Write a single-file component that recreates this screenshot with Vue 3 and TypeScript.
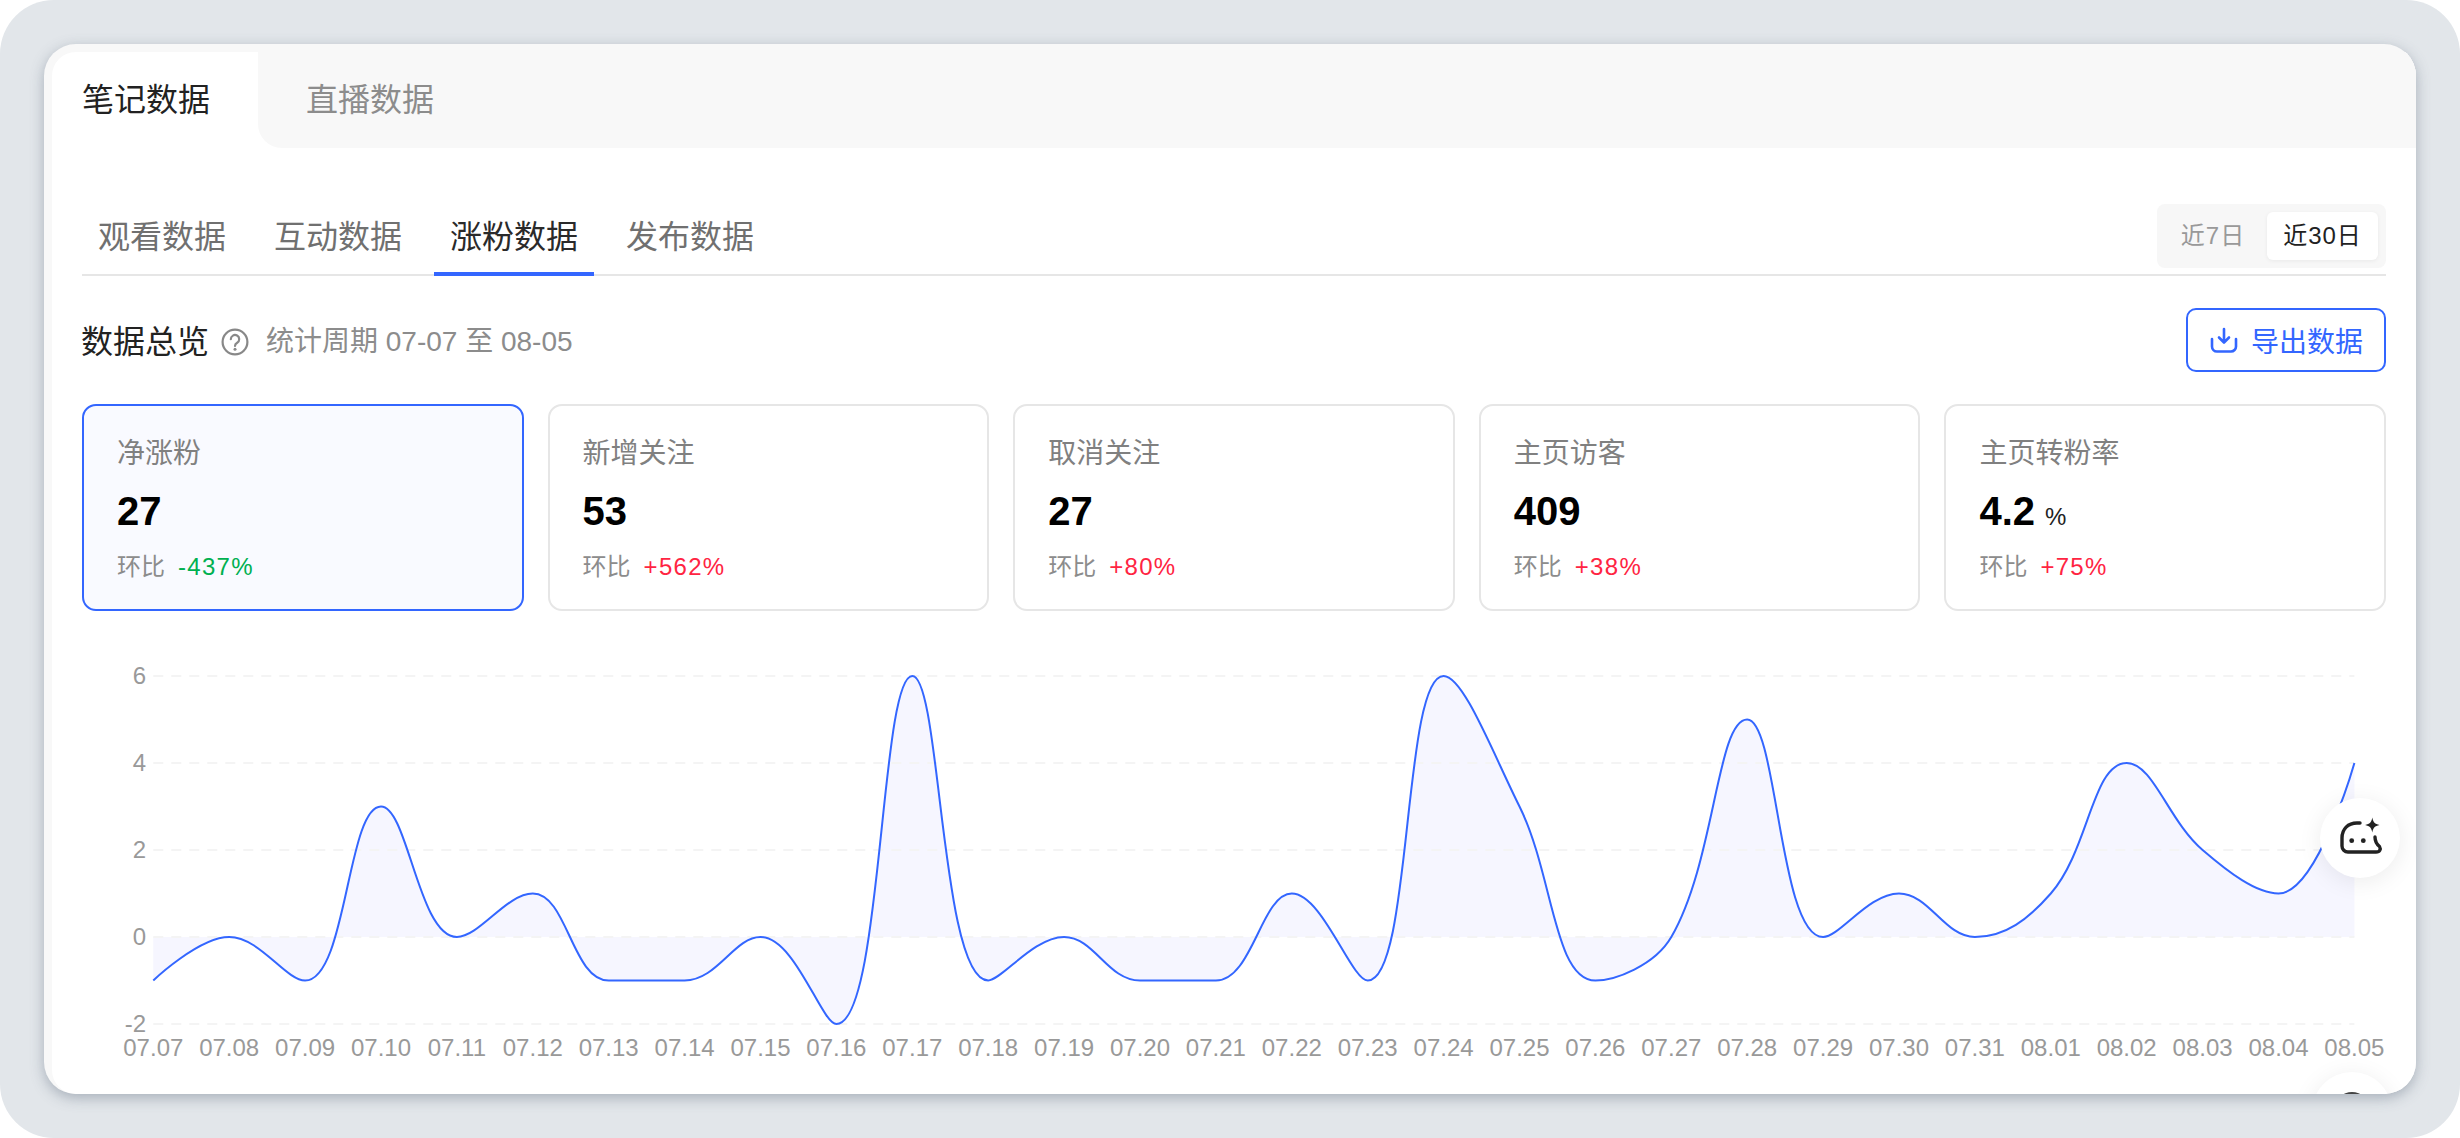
<template>
  <div class="frame">
    <div class="card">
      <div class="sheet">
        <div class="top-tabs">
          <div class="top-tab">笔记数据</div>
          <div class="top-rest">直播数据</div>
        </div>

        <div class="panel">
          <div class="sub-row">
            <div class="sub-tabs">
              <div
                v-for="t in subTabs"
                :key="t"
                class="sub-tab"
                :class="{ 'sub-tab--on': t === '涨粉数据' }"
              >{{ t }}</div>
            </div>
            <div class="seg">
              <span class="seg-item">近7日</span>
              <span class="seg-item seg-item--on">近30日</span>
            </div>
          </div>

          <div class="head-row">
            <div class="head-left">
              <span class="head-title">数据总览</span>
              <svg class="help" width="28" height="28" viewBox="0 0 28 28" fill="none" stroke="#888" stroke-width="2.2">
                <circle cx="14" cy="14" r="12.4" />
                <path d="M9.800 11.200a4.200 4.200 0 1 1 6.400 3.600c-1.500.9-2.200 1.600-2.200 3.100" stroke-linecap="round" />
                <circle cx="14" cy="21.200" r="1.500" fill="#888" stroke="none" />
              </svg>
              <span class="head-period">统计周期 07-07 至 08-05</span>
            </div>
            <button class="export">
              <svg width="28" height="28" viewBox="0 0 28 28" fill="none" stroke="#3366ff" stroke-width="2.6" stroke-linecap="round" stroke-linejoin="round">
                <path d="M14 3v13M9 11.500l5 5 5-5" />
                <path d="M2 13v7.500a5 5 0 0 0 5 5h14a5 5 0 0 0 5-5V13" />
              </svg>
              <span>导出数据</span>
            </button>
          </div>

          <div class="stats">
            <div
              v-for="(s, i) in stats"
              :key="s.label"
              class="stat"
              :class="{ 'stat--on': i === 0 }"
            >
              <div class="stat-label">{{ s.label }}</div>
              <div class="stat-value">{{ s.value }}<span v-if="s.unit" class="stat-unit">{{ s.unit }}</span></div>
              <div class="stat-cmp">
                <span>环比</span>
                <span class="stat-rate" :class="s.rate.startsWith('-') ? 'down' : 'up'">{{ s.rate }}</span>
              </div>
            </div>
          </div>
        </div>

        <svg class="chart" viewBox="52 611 2364 483" width="2364" height="483">
          <path :d="areaPath" fill="#5050ff" fill-opacity="0.05" />
          <g stroke="#f4f4f4" stroke-width="2" stroke-dasharray="10 8">
            <line v-for="t in ticks" :key="t" :x1="x0" :x2="x0 + step * 29" :y1="yOf(t)" :y2="yOf(t)" />
          </g>
          <path :d="linePath" fill="none" stroke="#3366ff" stroke-width="2" />
          <g class="axis">
            <text v-for="t in ticks" :key="t" x="146" :y="yOf(t) + 8" text-anchor="end">{{ t }}</text>
            <text v-for="(d, i) in days" :key="d" :x="x0 + step * i" y="1056" text-anchor="middle">{{ d }}</text>
          </g>
        </svg>

        <div class="fab">
          <svg width="46" height="46" viewBox="0 0 46 46" fill="none" stroke="#222" stroke-width="3.400" stroke-linecap="round" stroke-linejoin="round">
            <path d="M23 8h-3C11 8 5 14 5 23v8a6 6 0 0 0 6 6h28c4 0 5-3 3.500-5.500C39.500 29 38 27 38 22" />
            <circle cx="14.700" cy="25.700" r="2.400" fill="#222" stroke="none" />
            <circle cx="26.300" cy="25.700" r="2.400" fill="#222" stroke="none" />
            <path d="M35.300 2.500c.9 4.700 2.500 6.600 7.200 7.500-4.700.9-6.300 2.800-7.200 7.500-.9-4.700-2.500-6.600-7.200-7.500 4.700-.9 6.300-2.800 7.200-7.500z" fill="#222" stroke="none" />
          </svg>
        </div>
        <div class="fab fab--low"><i class="fab-dot"></i></div>
      </div>
    </div>
  </div>
</template>

<script setup lang="ts">
interface Stat {
  label: string
  value: string
  unit?: string
  rate: string
}

const subTabs = ['观看数据', '互动数据', '涨粉数据', '发布数据']

const stats: Stat[] = [
  { label: '净涨粉', value: '27', rate: '-437%' },
  { label: '新增关注', value: '53', rate: '+562%' },
  { label: '取消关注', value: '27', rate: '+80%' },
  { label: '主页访客', value: '409', rate: '+38%' },
  { label: '主页转粉率', value: '4.2', unit: '%', rate: '+75%' }
]

const days = [
  '07.07', '07.08', '07.09', '07.10', '07.11', '07.12', '07.13', '07.14', '07.15', '07.16',
  '07.17', '07.18', '07.19', '07.20', '07.21', '07.22', '07.23', '07.24', '07.25', '07.26',
  '07.27', '07.28', '07.29', '07.30', '07.31', '08.01', '08.02', '08.03', '08.04', '08.05'
]
const values = [-1, 0, -1, 3, 0, 1, -1, -1, 0, -2, 6, -1, 0, -1, -1, 1, -1, 6, 3, -1, 0, 5, 0, 1, 0, 1, 4, 2, 1, 4]
const ticks = [6, 4, 2, 0, -2]

const x0 = 153.3
const step = 75.9
const yOf = (v: number) => 937 - v * 43.5

const clamp = (v: number, a: number, b: number) => Math.max(Math.min(v, Math.max(a, b)), Math.min(a, b))

// echarts style smoothing, flat tangent on every extreme
function smoothPath(pts: number[][], smooth = 0.4) {
  let d = `M${pts[0][0]} ${pts[0][1]}`
  let cx0 = pts[0][0]
  let cy0 = pts[0][1]
  for (let i = 1; i < pts.length; i++) {
    const [x, y] = pts[i]
    const [px, py] = pts[i - 1]
    const next = pts[i + 1]
    if (!next) {
      d += `C${cx0} ${cy0} ${x} ${y} ${x} ${y}`
      break
    }
    const [nx, ny] = next
    const lenPrev = Math.hypot(x - px, y - py)
    const lenNext = Math.hypot(nx - x, ny - y)
    const ratio = lenNext / (lenNext + lenPrev)
    let cx1 = clamp(x + (nx - px) * smooth * ratio, x, nx)
    let cy1 = clamp(y + (ny - py) * smooth * ratio, y, ny)
    const bx = clamp(x - (cx1 - x) * lenPrev / lenNext, x, px)
    const by = clamp(y - (cy1 - y) * lenPrev / lenNext, y, py)
    cx1 = x + (x - bx) * lenNext / lenPrev
    cy1 = y + (y - by) * lenNext / lenPrev
    d += `C${cx0} ${cy0} ${bx} ${by} ${x} ${y}`
    cx0 = cx1
    cy0 = cy1
  }
  return d
}

const points = values.map((v, i) => [x0 + step * i, yOf(v)])
const linePath = smoothPath(points)
const areaPath = `${linePath}L${x0 + step * 29} ${yOf(0)}L${x0} ${yOf(0)}Z`
</script>

<style>
html,
body {
  background: #fff;
}
</style>

<style scoped>
.frame {
  box-sizing: border-box;
  width: 2460px;
  height: 1138px;
  padding: 44px;
  background: #e2e6ea;
  border-radius: 54px;
  font-family: "Liberation Sans", "Noto Sans CJK SC", sans-serif;
  color: #222;
}

.card {
  box-sizing: border-box;
  height: 1050px;
  padding: 8px 0 0 8px;
  background: #f8f8f8;
  border-radius: 32px;
  overflow: hidden;
  box-shadow: 0 4px 14px rgba(85, 100, 120, 0.42);
}

.sheet {
  position: relative;
  height: 100%;
  background: #fff;
  border-radius: 24px 0 0 24px;
  overflow: hidden;
}

.top-tabs {
  display: flex;
  height: 96px;
  font-size: 32px;
  line-height: 96px;
}

.top-tab {
  box-sizing: border-box;
  width: 206px;
  padding-left: 30px;
}

.top-rest {
  flex: 1;
  padding-left: 48px;
  color: #8c8c8c;
  background: #f8f8f8;
  border-bottom-left-radius: 24px;
}

.panel {
  padding: 56px 30px 0;
}

.sub-row {
  display: flex;
  justify-content: space-between;
  box-sizing: border-box;
  height: 72px;
  border-bottom: 2px solid #e6e6e6;
}

.sub-tabs {
  display: flex;
  gap: 16px;
}

.sub-tab {
  box-sizing: border-box;
  width: 160px;
  height: 72px;
  font-size: 32px;
  line-height: 66px;
  text-align: center;
  color: #707070;
}

.sub-tab--on {
  color: #2a2a2a;
  border-bottom: 4px solid #3366ff;
}

.seg {
  display: flex;
  box-sizing: border-box;
  height: 64px;
  padding: 8px;
  background: #f7f7f7;
  border-radius: 8px;
}

.seg-item {
  box-sizing: border-box;
  width: 102px;
  padding-right: 6px;
  font-size: 24px;
  line-height: 48px;
  letter-spacing: 1px;
  text-align: center;
  color: #999;
  border-radius: 6px;
}

.seg-item--on {
  width: 111px;
  padding-right: 0;
  color: #222;
  background: #fff;
  box-shadow: 0 1px 4px rgba(0, 0, 0, 0.06);
}

.head-row {
  display: flex;
  align-items: center;
  justify-content: space-between;
  margin-top: 32px;
  height: 64px;
}

.head-left {
  display: flex;
  align-items: center;
  margin-left: -1px;
  padding-top: 4px;
}

.head-title {
  font-size: 32px;
  line-height: 44px;
}

.help {
  margin: 0 17px 0 12px;
}

.head-period {
  font-size: 28px;
  line-height: 44px;
  color: #8c8c8c;
}

.export {
  display: flex;
  align-items: center;
  gap: 13px;
  box-sizing: border-box;
  width: 200px;
  height: 64px;
  padding: 0 0 0 22px;
  font: inherit;
  font-size: 28px;
  white-space: nowrap;
  color: #3366ff;
  background: #fff;
  border: 2px solid #3366ff;
  border-radius: 10px;
}

.stats {
  display: grid;
  grid-template-columns: repeat(5, 1fr);
  gap: 24px;
  margin-top: 32px;
}

.stat {
  box-sizing: border-box;
  height: 207px;
  padding: 28px 32px 0 33px;
  border: 2px solid #e6e6e6;
  border-radius: 14px;
}

.stat--on {
  background: #f9faff;
  border-color: #3366ff;
}

.stat-label {
  font-size: 28px;
  line-height: 40px;
  color: #808080;
}

.stat-value {
  height: 48px;
  margin-top: 13px;
  font-size: 40px;
  font-weight: 700;
  line-height: 48px;
  color: #000;
}

.stat-unit {
  margin-left: 10px;
  font-size: 24px;
  font-weight: 400;
  line-height: 1;
  color: #222;
}

.stat-cmp {
  display: flex;
  gap: 13px;
  margin-top: 16px;
  font-size: 24px;
  line-height: 32px;
  color: #8c8c8c;
}

.stat-rate {
  letter-spacing: 1.3px;
}

.up {
  color: #ff2442;
}

.down {
  color: #00b050;
}

.chart {
  display: block;
}

.axis {
  font-size: 24px;
  fill: #999;
}

.fab {
  position: absolute;
  right: 16px;
  bottom: 216px;
  display: flex;
  align-items: center;
  justify-content: center;
  width: 80px;
  height: 80px;
  box-sizing: border-box;
  background: #fff;
  border-radius: 50%;
  box-shadow: 0 4px 24px rgba(0, 0, 0, 0.08);
}

.fab--low {
  right: 24px;
  bottom: -58px;
  align-items: flex-start;
  padding: 20px 0 0;
}

.fab-dot {
  display: block;
  width: 34px;
  height: 34px;
  background: #444;
  border-radius: 50%;
}
</style>
